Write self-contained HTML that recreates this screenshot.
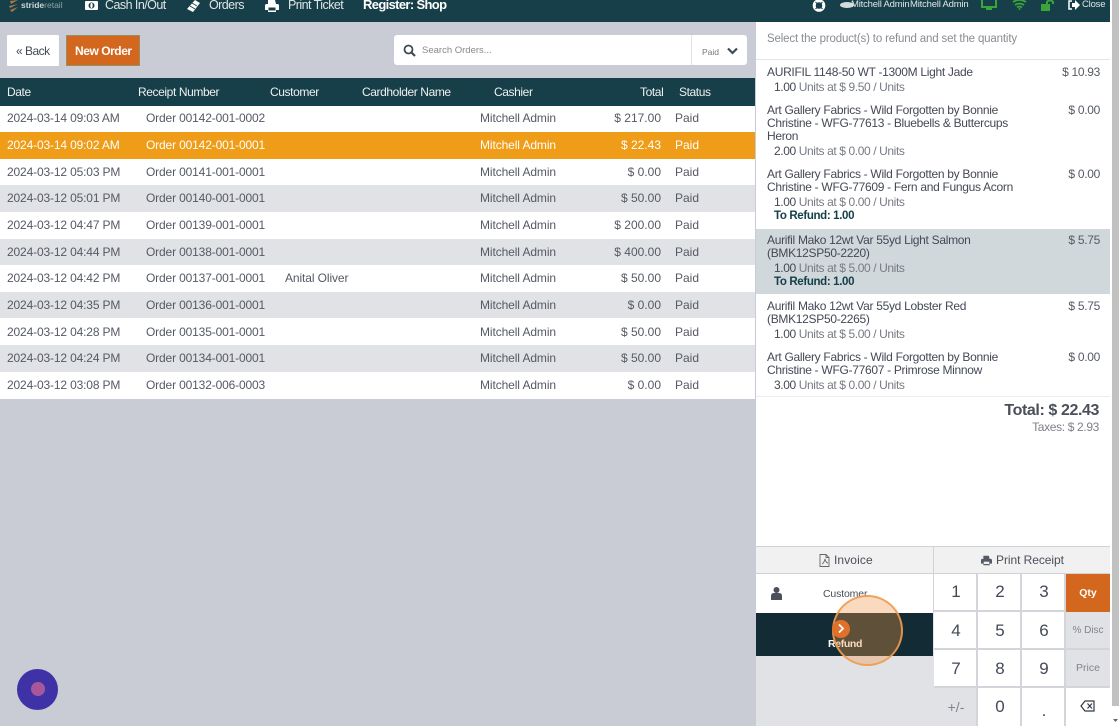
<!DOCTYPE html>
<html><head><meta charset="utf-8">
<style>
html,body{margin:0;padding:0;width:1120px;height:726px;overflow:hidden;background:#c9ccd4;font-family:"Liberation Sans",sans-serif;color:#4a4f59}
.a{position:absolute}
.t{position:absolute;white-space:nowrap;line-height:16px;font-size:12px}
.box{position:absolute;box-sizing:border-box}
.th{color:#fff;font-size:12px;top:84px;opacity:.92;letter-spacing:-.4px}
.nav{top:-3px;font-size:12.5px;color:#dfe5e6;letter-spacing:-.55px}
.c{font-size:12px;color:#555a63}
.n{font-size:12px;color:#444955;letter-spacing:-.3px}
.u{font-size:12px;color:#777b83;letter-spacing:-.39px}
.u b{color:#444955;font-weight:normal}
.r{font-size:11.5px;color:#15404a;font-weight:bold;letter-spacing:-.35px}
.p{font-size:12px;color:#555a63;text-align:right;right:20px}
.q{letter-spacing:-.3px}
.k{position:absolute;box-sizing:border-box;background:#fff;border-right:2px solid #d3d5da;border-bottom:2px solid #d3d5da;text-align:center;color:#444955;font-size:17px;display:flex;align-items:center;justify-content:center;padding-left:2px}
.m{padding-top:2px}
.s{padding-left:0}
</style></head><body>
<!-- top bar -->
<div class="box" style="left:0;top:0;width:1110px;height:22px;background:#173f49"></div>
<svg class="a" style="left:8px;top:0" width="12" height="13" viewBox="0 0 12 13"><path d="M2 1l8-1-7 4zM1 6l9-2-8 4zM2 10l8-3-6 5z" fill="#a47a4a"/></svg>
<div class="t" style="left:21px;top:-3px;font-size:8.500px;color:#cfd6d8;font-weight:bold">stride<span style="color:#8ea3a8;font-weight:normal">retail</span></div>
<svg class="a" style="left:85px;top:1px" width="13" height="9" viewBox="0 0 13 9"><rect width="13" height="9" rx="1" fill="#fff"/><circle cx="6.500" cy="4.500" r="3" fill="#173f49"/><ellipse cx="6.500" cy="4.500" rx="1.200" ry="2.500" fill="#fff"/></svg>
<div class="t nav" style="left:105px">Cash In/Out</div>
<svg class="a" style="left:186px;top:0" width="14" height="12" viewBox="0 0 14 12"><path d="M9 0l5 3-7 9-6-3z" fill="#fff"/><path d="M6 3l5 3M4 6l5 3" stroke="#173f49" stroke-width=".8"/></svg>
<div class="t nav" style="left:209px">Orders</div>
<svg class="a" style="left:265px;top:0" width="14" height="12" viewBox="0 0 14 12"><path d="M3 0h7l1 4h2l1 1v5h-3v2H3v-2H0V5l1-1h2z" fill="#fff"/><rect x="3.500" y="7.500" width="7" height="3" fill="#173f49"/></svg>
<div class="t nav" style="left:288px">Print Ticket</div>
<div class="t" style="left:363px;top:-3px;font-size:13px;font-weight:bold;color:#fff;letter-spacing:-.65px">Register: Shop</div>
<svg class="a" style="left:812px;top:-1px" width="14" height="13" viewBox="0 0 14 13"><circle cx="7" cy="6.500" r="4.800" fill="none" stroke="#fff" stroke-width="3"/><path d="M3.500 3l2 2M10.500 3l-2 2M3.500 10l2-2M10.500 10l-2-2" stroke="#173f49" stroke-width="1"/></svg>
<svg class="a" style="left:840px;top:1px" width="14" height="8" viewBox="0 0 14 8"><ellipse cx="7" cy="4" rx="7" ry="3" fill="#d5dcdd"/></svg>
<div class="t" style="left:851px;top:-3px;font-size:9.500px;color:#dfe5e6;letter-spacing:-.2px">Mitchell Admin</div>
<div class="t" style="left:910px;top:-3px;font-size:9.500px;color:#dfe5e6;letter-spacing:-.2px">Mitchell Admin</div>
<svg class="a" style="left:981px;top:0" width="16" height="11" viewBox="0 0 16 11"><path d="M1 0v7h14V0" fill="none" stroke="#3aa53a" stroke-width="2"/><rect x="5" y="8" width="6" height="2" fill="#3aa53a"/></svg>
<svg class="a" style="left:1012px;top:0" width="15" height="10" viewBox="0 0 15 10"><path d="M1 2q6.500-4 13 0M3 5q4.500-3 9 0M5 7.500q2.500-2 5 0" fill="none" stroke="#3aa53a" stroke-width="1.800"/><circle cx="7.500" cy="9" r="1" fill="#3aa53a"/></svg>
<svg class="a" style="left:1041px;top:0" width="14" height="11" viewBox="0 0 14 11"><rect y="4" width="9" height="7" fill="#3aa53a"/><path d="M6 4V2.500a3 2 0 0 1 6 0V4" fill="none" stroke="#3aa53a" stroke-width="2"/></svg>
<svg class="a" style="left:1068px;top:0" width="12" height="10" viewBox="0 0 12 10"><path d="M4 1H1v8h3" fill="none" stroke="#fff" stroke-width="1.500"/><path d="M4 3h3V0l5 5-5 5V7H4z" fill="#fff"/></svg>
<div class="t" style="left:1082px;top:-3px;font-size:9.500px;color:#dfe5e6;letter-spacing:-.2px">Close</div>

<!-- buttons -->
<div class="box" style="left:7px;top:35px;width:52px;height:31px;background:#fff;border-radius:1px"></div>
<div class="t" style="left:16px;top:43px;font-size:12px;color:#444955;letter-spacing:-.5px">« Back</div>
<div class="box" style="left:66px;top:35px;width:74px;height:31px;background:#d2671d;border:1px solid #9a8d62"></div>
<div class="t" style="left:75px;top:43px;font-size:12px;font-weight:bold;color:#fff;letter-spacing:-.45px">New Order</div>
<!-- search -->
<div class="box" style="left:394px;top:35px;width:353px;height:30px;background:#fff;border-radius:3px"></div>
<div class="box" style="left:691px;top:35px;width:1px;height:30px;background:#e3e4e7"></div>
<svg class="a" style="left:403px;top:44px" width="13" height="13" viewBox="0 0 13 13"><circle cx="5.500" cy="5.500" r="4" fill="none" stroke="#3f4a55" stroke-width="1.800"/><path d="M8.500 8.500l3.500 3.500" stroke="#3f4a55" stroke-width="2.200"/></svg>
<div class="t" style="left:422px;top:43px;font-size:9.500px;color:#888">Search Orders...</div>
<div class="t" style="left:702px;top:44px;font-size:8.500px;color:#777">Paid</div>
<svg class="a" style="left:727px;top:47px" width="11" height="8" viewBox="0 0 11 8"><path d="M1 1.500l4.500 4.500 4.500-4.500" fill="none" stroke="#3f4a55" stroke-width="2.200"/></svg>

<!-- table header -->
<div class="box" style="left:0;top:78px;width:755px;height:28px;background:#173f49"></div>
<div class="t th" style="left:7px">Date</div>
<div class="t th" style="left:138px">Receipt Number</div>
<div class="t th" style="left:270px">Customer</div>
<div class="t th" style="left:362px">Cardholder Name</div>
<div class="t th" style="left:494px">Cashier</div>
<div class="t th" style="left:640px">Total</div>
<div class="t th" style="left:679px">Status</div>

<!-- rows -->
<div class="box" style="left:0;top:105.500px;width:755px;height:293px;background:#fff"></div>
<div class="box" style="left:0;top:132px;width:755px;height:26.600px;background:#ef9c18"></div>
<div class="box" style="left:0;top:185.300px;width:755px;height:26.600px;background:#e0e2e6"></div>
<div class="box" style="left:0;top:238.500px;width:755px;height:26.600px;background:#e0e2e6"></div>
<div class="box" style="left:0;top:291.800px;width:755px;height:26.600px;background:#e0e2e6"></div>
<div class="box" style="left:0;top:345px;width:755px;height:26.600px;background:#e0e2e6"></div>

<div class="t c" style="left:7px;top:110px;letter-spacing:-.15px">2024-03-14 09:03 AM</div><div class="t c" style="left:146px;top:110px;letter-spacing:-.15px">Order 00142-001-0002</div><div class="t c" style="left:480px;top:110px;letter-spacing:-.1px">Mitchell Admin</div><div class="t p" style="right:459px;top:110px">$ 217.00</div><div class="t c" style="left:675px;top:110px">Paid</div>
<div class="t c" style="color:#fff;left:7px;top:137px;letter-spacing:-.15px">2024-03-14 09:02 AM</div><div class="t c" style="color:#fff;left:146px;top:137px;letter-spacing:-.15px">Order 00142-001-0001</div><div class="t c" style="color:#fff;left:480px;top:137px;letter-spacing:-.1px">Mitchell Admin</div><div class="t p" style="color:#fff;right:459px;top:137px">$ 22.43</div><div class="t c" style="color:#fff;left:675px;top:137px">Paid</div>
<div class="t c" style="left:7px;top:164px;letter-spacing:-.15px">2024-03-12 05:03 PM</div><div class="t c" style="left:146px;top:164px;letter-spacing:-.15px">Order 00141-001-0001</div><div class="t c" style="left:480px;top:164px;letter-spacing:-.1px">Mitchell Admin</div><div class="t p" style="right:459px;top:164px">$ 0.00</div><div class="t c" style="left:675px;top:164px">Paid</div>
<div class="t c" style="left:7px;top:190px;letter-spacing:-.15px">2024-03-12 05:01 PM</div><div class="t c" style="left:146px;top:190px;letter-spacing:-.15px">Order 00140-001-0001</div><div class="t c" style="left:480px;top:190px;letter-spacing:-.1px">Mitchell Admin</div><div class="t p" style="right:459px;top:190px">$ 50.00</div><div class="t c" style="left:675px;top:190px">Paid</div>
<div class="t c" style="left:7px;top:217px;letter-spacing:-.15px">2024-03-12 04:47 PM</div><div class="t c" style="left:146px;top:217px;letter-spacing:-.15px">Order 00139-001-0001</div><div class="t c" style="left:480px;top:217px;letter-spacing:-.1px">Mitchell Admin</div><div class="t p" style="right:459px;top:217px">$ 200.00</div><div class="t c" style="left:675px;top:217px">Paid</div>
<div class="t c" style="left:7px;top:244px;letter-spacing:-.15px">2024-03-12 04:44 PM</div><div class="t c" style="left:146px;top:244px;letter-spacing:-.15px">Order 00138-001-0001</div><div class="t c" style="left:480px;top:244px;letter-spacing:-.1px">Mitchell Admin</div><div class="t p" style="right:459px;top:244px">$ 400.00</div><div class="t c" style="left:675px;top:244px">Paid</div>
<div class="t c" style="left:7px;top:270px;letter-spacing:-.15px">2024-03-12 04:42 PM</div><div class="t c" style="left:146px;top:270px;letter-spacing:-.15px">Order 00137-001-0001</div><div class="t c" style="left:285px;top:270px;letter-spacing:-.1px">Anital Oliver</div><div class="t c" style="left:480px;top:270px;letter-spacing:-.1px">Mitchell Admin</div><div class="t p" style="right:459px;top:270px">$ 50.00</div><div class="t c" style="left:675px;top:270px">Paid</div>
<div class="t c" style="left:7px;top:297px;letter-spacing:-.15px">2024-03-12 04:35 PM</div><div class="t c" style="left:146px;top:297px;letter-spacing:-.15px">Order 00136-001-0001</div><div class="t c" style="left:480px;top:297px;letter-spacing:-.1px">Mitchell Admin</div><div class="t p" style="right:459px;top:297px">$ 0.00</div><div class="t c" style="left:675px;top:297px">Paid</div>
<div class="t c" style="left:7px;top:324px;letter-spacing:-.15px">2024-03-12 04:28 PM</div><div class="t c" style="left:146px;top:324px;letter-spacing:-.15px">Order 00135-001-0001</div><div class="t c" style="left:480px;top:324px;letter-spacing:-.1px">Mitchell Admin</div><div class="t p" style="right:459px;top:324px">$ 50.00</div><div class="t c" style="left:675px;top:324px">Paid</div>
<div class="t c" style="left:7px;top:350px;letter-spacing:-.15px">2024-03-12 04:24 PM</div><div class="t c" style="left:146px;top:350px;letter-spacing:-.15px">Order 00134-001-0001</div><div class="t c" style="left:480px;top:350px;letter-spacing:-.1px">Mitchell Admin</div><div class="t p" style="right:459px;top:350px">$ 50.00</div><div class="t c" style="left:675px;top:350px">Paid</div>
<div class="t c" style="left:7px;top:377px;letter-spacing:-.15px">2024-03-12 03:08 PM</div><div class="t c" style="left:146px;top:377px;letter-spacing:-.15px">Order 00132-006-0003</div><div class="t c" style="left:480px;top:377px;letter-spacing:-.1px">Mitchell Admin</div><div class="t p" style="right:459px;top:377px">$ 0.00</div><div class="t c" style="left:675px;top:377px">Paid</div>

<!-- right panel -->
<div class="box" style="left:756px;top:22px;width:354px;height:704px;background:#fff"></div>
<div class="box" style="left:756px;top:59px;width:354px;height:1px;background:#e4e5e8"></div>
<div class="t" style="left:767px;top:31px;font-size:11.500px;color:#888c92;letter-spacing:-.16px">Select the product(s) to refund and set the quantity</div>

<div class="t n" style="left:767px;top:64px">AURIFIL 1148-50 WT -1300M Light Jade</div><div class="t p q" style="top:64px">$ 10.93</div>
<div class="t u" style="left:774px;top:79px"><b>1.00</b> Units at $ 9.50 / Units</div>

<div class="t n" style="left:767px;top:102px">Art Gallery Fabrics - Wild Forgotten by Bonnie</div><div class="t p q" style="top:102px">$ 0.00</div>
<div class="t n" style="left:767px;top:115px">Christine - WFG-77613 - Bluebells &amp; Buttercups</div>
<div class="t n" style="left:767px;top:128px">Heron</div>
<div class="t u" style="left:774px;top:143px"><b>2.00</b> Units at $ 0.00 / Units</div>

<div class="t n" style="left:767px;top:166px">Art Gallery Fabrics - Wild Forgotten by Bonnie</div><div class="t p q" style="top:166px">$ 0.00</div>
<div class="t n" style="left:767px;top:179px">Christine - WFG-77609 - Fern and Fungus Acorn</div>
<div class="t u" style="left:774px;top:194px"><b>1.00</b> Units at $ 0.00 / Units</div>
<div class="t r" style="left:774px;top:208px">To Refund: 1.00</div>

<div class="box" style="left:756px;top:229px;width:354px;height:65px;background:#d0d8db"></div>
<div class="t n" style="left:767px;top:232px">Aurifil Mako 12wt Var 55yd Light Salmon</div><div class="t p q" style="top:232px">$ 5.75</div>
<div class="t n" style="left:767px;top:245px">(BMK12SP50-2220)</div>
<div class="t u" style="left:774px;top:260px"><b>1.00</b> Units at $ 5.00 / Units</div>
<div class="t r" style="left:774px;top:274px">To Refund: 1.00</div>

<div class="t n" style="left:767px;top:298px">Aurifil Mako 12wt Var 55yd Lobster Red</div><div class="t p q" style="top:298px">$ 5.75</div>
<div class="t n" style="left:767px;top:311px">(BMK12SP50-2265)</div>
<div class="t u" style="left:774px;top:326px"><b>1.00</b> Units at $ 5.00 / Units</div>

<div class="t n" style="left:767px;top:349px">Art Gallery Fabrics - Wild Forgotten by Bonnie</div><div class="t p q" style="top:349px">$ 0.00</div>
<div class="t n" style="left:767px;top:362px">Christine - WFG-77607 - Primrose Minnow</div>
<div class="t u" style="left:774px;top:377px"><b>3.00</b> Units at $ 0.00 / Units</div>

<div class="box" style="left:756px;top:396px;width:354px;height:1px;background:#ecedef"></div>
<div class="t" style="right:21px;top:403px;font-size:16px;font-weight:bold;color:#4a4f59;letter-spacing:-.4px">Total: $ 22.43</div>
<div class="t" style="right:21px;top:419px;font-size:12px;color:#7d8188;letter-spacing:-.35px">Taxes: $ 2.93</div>

<!-- bottom controls -->
<div class="box" style="left:756px;top:546px;width:354px;height:180px;background:#e0e2e6"></div>
<div class="box" style="left:756px;top:546px;width:178px;height:28px;background:#f1f1f2;border-top:1px solid #d0d2d6;border-bottom:1px solid #d0d2d6;border-right:1px solid #d0d2d6"></div>
<div class="box" style="left:934px;top:546px;width:176px;height:28px;background:#f1f1f2;border-top:1px solid #d0d2d6;border-bottom:1px solid #d0d2d6"></div>
<svg class="a" style="left:819px;top:554px" width="11" height="13" viewBox="0 0 11 13"><path d="M1 .5h6l3 3v9H1zM7 .5v3h3M3 10q2-1 3-5 1 4 3 4" fill="none" stroke="#666" stroke-width=".9"/></svg>
<div class="t" style="left:834px;top:552px;font-size:12px;color:#4a4f59;letter-spacing:.1px">Invoice</div>
<svg class="a" style="left:981px;top:555px" width="11" height="11" viewBox="0 0 14 12"><path d="M3 0h7l1 4h2l1 1v5h-3v2H3v-2H0V5l1-1h2z" fill="#555a63"/><rect x="3.500" y="7.500" width="7" height="3" fill="#f1f1f2"/></svg>
<div class="t" style="left:996px;top:552px;font-size:12px;color:#4a4f59;letter-spacing:-.06px">Print Receipt</div>

<div class="box" style="left:756px;top:574px;width:178px;height:39px;background:#fff;border-right:1px solid #d0d2d6"></div>
<svg class="a" style="left:771px;top:587px" width="11" height="13" viewBox="0 0 11 13"><circle cx="5.500" cy="3" r="3" fill="#4a4f59"/><path d="M0 13V9q0-3 3-3h5q3 0 3 3v4z" fill="#4a4f59"/></svg>
<div class="t" style="left:823px;top:586px;font-size:10.500px;color:#4a4f59;letter-spacing:-.15px">Customer</div>
<div class="box" style="left:756px;top:613px;width:177px;height:43px;background:#122b34"></div>
<div class="t" style="left:828px;top:636px;font-size:10.500px;font-weight:bold;color:#fff;letter-spacing:-.35px">Refund</div>

<div class="k" style="left:934px;top:574px;width:44px;height:38px">1</div>
<div class="k" style="left:978px;top:574px;width:44px;height:38px">2</div>
<div class="k" style="left:1022px;top:574px;width:44px;height:38px">3</div>
<div class="k s" style="left:1066px;top:574px;width:44px;height:38px;background:#d2671d;color:#fff;font-size:10.500px;font-weight:bold;border:0">Qty</div>
<div class="k m" style="left:934px;top:612px;width:44px;height:38px">4</div>
<div class="k m" style="left:978px;top:612px;width:44px;height:38px">5</div>
<div class="k m" style="left:1022px;top:612px;width:44px;height:38px">6</div>
<div class="k s" style="left:1066px;top:612px;width:44px;height:38px;background:#e0e2e6;color:#80848c;font-size:10px;border-right:0">% Disc</div>
<div class="k m" style="left:934px;top:650px;width:44px;height:38px">7</div>
<div class="k m" style="left:978px;top:650px;width:44px;height:38px">8</div>
<div class="k m" style="left:1022px;top:650px;width:44px;height:38px">9</div>
<div class="k s" style="left:1066px;top:650px;width:44px;height:38px;background:#e0e2e6;color:#80848c;font-size:10.500px;border-right:0">Price</div>
<div class="k" style="left:934px;top:688px;width:44px;height:38px;background:#e0e2e6;color:#80848c;font-size:14px;border-bottom:0">+/-</div>
<div class="k" style="left:978px;top:688px;width:44px;height:38px;border-bottom:0">0</div>
<div class="k" style="left:1022px;top:688px;width:44px;height:38px;border-bottom:0;padding-top:8px">.</div>
<div class="k s" style="left:1066px;top:688px;width:44px;height:38px;border:0"></div>
<svg class="a" style="left:1080px;top:700px" width="15" height="12" viewBox="0 0 15 12"><path d="M5 1h9v10H5L1 6z" fill="none" stroke="#333a44" stroke-width="1.200"/><path d="M7.500 3.500l4.500 5M12 3.500l-4.500 5" stroke="#333a44" stroke-width="1.200"/></svg>

<!-- highlight circle -->
<div class="box" style="left:832px;top:595px;width:71px;height:71px;border-radius:50%;background:rgba(240,150,70,.35);border:2.500px solid rgba(240,155,80,.9)"></div>
<div class="box" style="left:832px;top:620px;width:18px;height:18px;border-radius:50%;background:#e0702a"></div>
<svg class="a" style="left:837px;top:623px" width="8" height="11" viewBox="0 0 8 11"><path d="M2 1.500l4 4-4 4" fill="none" stroke="#fff" stroke-width="1.800"/></svg>

<!-- scrollbar -->
<div class="box" style="left:1110px;top:0;width:10px;height:726px;background:#fff"></div>
<div class="box" style="left:1112px;top:0;width:7px;height:706px;background:#c1c1c1"></div>
<svg class="a" style="left:1112px;top:718px" width="7" height="5" viewBox="0 0 7 5"><path d="M1 1h5L3.500 4z" fill="#666"/></svg>

<!-- chat bubble -->
<div class="box" style="left:17px;top:669px;width:41px;height:41px;border-radius:50%;background:#3e32a6"></div>
<div class="box" style="left:31px;top:682px;width:14px;height:14px;border-radius:50%;background:#a8589a"></div>
</body></html>
